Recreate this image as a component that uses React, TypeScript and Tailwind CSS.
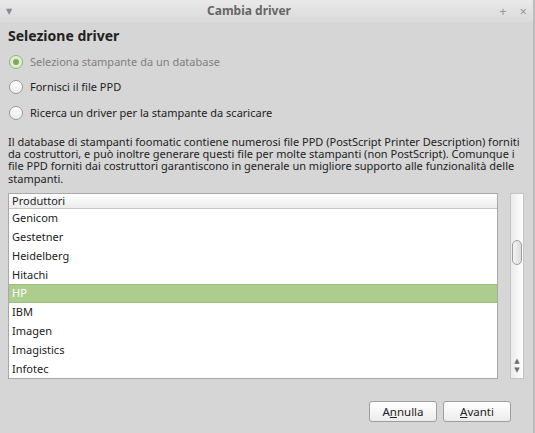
import { useState } from 'react';

const makers = ['Genicom', 'Gestetner', 'Heidelberg', 'Hitachi', 'HP', 'IBM', 'Imagen', 'Imagistics', 'Infotec'];

function Radio({ checked, disabled, label }: { checked?: boolean; disabled?: boolean; label: string }) {
  return (
    <label className="flex items-center gap-[7px] h-[25.5px]">
      <span
        className={`w-[14px] h-[14px] rounded-full border flex items-center justify-center ${
          checked ? 'border-[#8fb472] bg-[#dfeed3]' : 'border-[#9a9a9a] bg-gradient-to-b from-white to-[#ececec]'
        }`}
      >
        {checked && <span className="w-[6px] h-[6px] rounded-full bg-[#7faa5e]" />}
      </span>
      <span className={disabled ? 'text-[#808080]' : 'text-[#222]'}>{label}</span>
    </label>
  );
}

export default function App() {
  const [selected, setSelected] = useState('HP');

  return (
    <div
      className="w-[535px] h-[433px] bg-[#d6d6d6] flex flex-col border-r-2 border-[#bdbdbd] text-[11px] text-[#222] overflow-hidden"
      style={{ fontFamily: '"Noto Sans", "DejaVu Sans", sans-serif' }}
    >
      {/* Title bar */}
      <div className="h-[22px] flex items-center pl-[6px] pr-[6px] bg-gradient-to-b from-[#e9e9e9] to-[#dadada]">
        <span className="text-[#8a8a8a] text-[8px] leading-none w-[20px]">▼</span>
        <span className="flex-1 text-center font-bold text-[#666] text-[12px]">Cambia driver</span>
        <span className="w-[55px] flex justify-end gap-[13px] text-[#9a9a9a] text-[13px] leading-none">
          <span>+</span>
          <span>×</span>
        </span>
      </div>

      <div className="flex-1 flex flex-col px-[8px]">
        <h1 className="font-bold text-[14px] mt-[3px] mb-[3px]">Selezione driver</h1>

        <div className="flex flex-col pl-[1px]">
          <Radio checked disabled label="Seleziona stampante da un database" />
          <Radio label="Fornisci il file PPD" />
          <Radio label="Ricerca un driver per la stampante da scaricare" />
        </div>

        <p className="mt-[10px] leading-[12.4px] text-[11px]">
          Il database di stampanti foomatic contiene numerosi file PPD (PostScript Printer Description) forniti da
          costruttori, e può inoltre generare questi file per molte stampanti (non PostScript). Comunque i file PPD
          forniti dai costruttori garantiscono in generale un migliore supporto alle funzionalità delle stampanti.
        </p>

        <div className="mt-[8px] flex gap-[12px]">
          {/* List */}
          <div className="w-[490px] border border-[#a8a8a8] bg-white flex flex-col">
            <div className="h-[15px] leading-[14px] px-[3px] bg-gradient-to-b from-white to-[#ececec] border-b border-[#c8c8c8]">
              Produttori
            </div>
            <div className="flex flex-col">
              {makers.map((m) => (
                <div
                  key={m}
                  onClick={() => setSelected(m)}
                  className={`h-[18.8px] flex items-center px-[3px] ${
                    selected === m ? 'bg-[#adcd8e] text-white border-y border-[#9dbf7e]' : ''
                  }`}
                >
                  {m}
                </div>
              ))}
            </div>
          </div>

          {/* Scrollbar */}
          <div className="w-[14px] border border-[#c4c4c4] bg-gradient-to-r from-[#ebebeb] to-white flex flex-col items-center">
            <div className="mt-[46px] w-[10px] h-[25px] rounded-[5px] border border-[#9c9c9c] bg-gradient-to-r from-[#f4f4f4] to-[#dcdcdc]" />
            <div className="flex-1" />
            <div className="text-[#6e6e6e] text-[7px] leading-[9px] mb-[4px] flex flex-col items-center">
              <span>▲</span>
              <span>▼</span>
            </div>
          </div>
        </div>

        <div className="flex justify-end gap-[6px] mt-[22px] pr-[14px]">
          <button className="w-[68px] h-[21px] rounded-[3px] border border-[#9e9e9e] bg-gradient-to-b from-white to-[#ececec] text-[11.5px]">
            A<span className="underline">n</span>nulla
          </button>
          <button className="w-[68px] h-[21px] rounded-[3px] border border-[#9e9e9e] bg-gradient-to-b from-white to-[#ececec] text-[11.5px]">
            <span className="underline">A</span>vanti
          </button>
        </div>
      </div>
    </div>
  );
}
